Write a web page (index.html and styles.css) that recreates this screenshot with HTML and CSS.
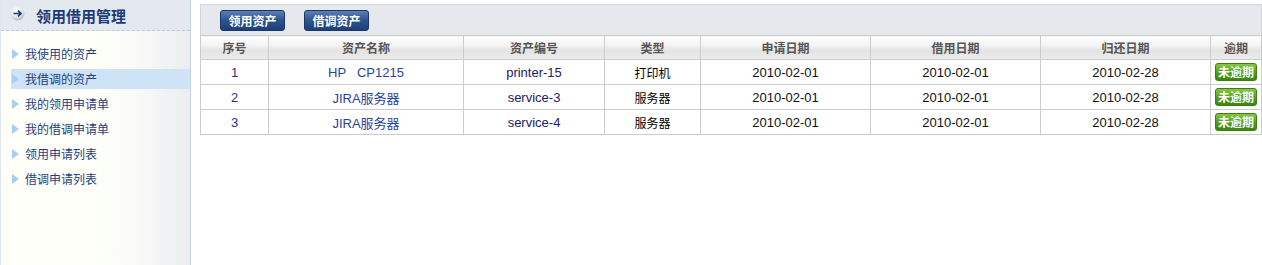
FILE: index.html
```html
<!DOCTYPE html>
<html lang="zh-CN">
<head>
    <meta charset="UTF-8">
    <title>领用借用管理</title>
    <link rel="stylesheet" href="styles.css">
</head>
<body>
    <div class="side">
        <div class="side-head">
            <svg class="head-icon" width="15" height="15" viewBox="0 0 15 15">
                <defs>
                    <radialGradient id="ball" cx="40%" cy="30%" r="75%">
                        <stop offset="0" stop-color="#ffffff"/>
                        <stop offset="0.6" stop-color="#e2e6ec"/>
                        <stop offset="1" stop-color="#a7b1bf"/>
                    </radialGradient>
                </defs>
                <circle cx="7.5" cy="7.5" r="7" fill="url(#ball)"/>
                <path d="M3.5 7.5 H11 M8 4.6 L11 7.5 L8 10.4" fill="none" stroke="#1d3a6e" stroke-width="1.7"/>
            </svg>
            <span class="head-title">领用借用管理</span>
        </div>
        <ul class="menu">
            <li><i></i>我使用的资产</li>
            <li class="current"><i></i>我借调的资产</li>
            <li><i></i>我的领用申请单</li>
            <li><i></i>我的借调申请单</li>
            <li><i></i>领用申请列表</li>
            <li><i></i>借调申请列表</li>
        </ul>
    </div>

    <div class="main">
        <div class="toolbar">
            <span class="btn">领用资产</span>
            <span class="btn">借调资产</span>
        </div>
        <table class="list">
            <tr>
                <th class="c-no">序号</th>
                <th class="c-name">资产名称</th>
                <th class="c-code">资产编号</th>
                <th class="c-type">类型</th>
                <th class="c-date">申请日期</th>
                <th class="c-date">借用日期</th>
                <th class="c-date">归还日期</th>
                <th class="c-over">逾期</th>
            </tr>
            <tr>
                <td class="no">1</td>
                <td class="name">HP&nbsp;&nbsp;&nbsp;CP1215</td>
                <td class="code">printer-15</td>
                <td class="type">打印机</td>
                <td>2010-02-01</td>
                <td>2010-02-01</td>
                <td>2010-02-28</td>
                <td><span class="tag">未逾期</span></td>
            </tr>
            <tr>
                <td class="no">2</td>
                <td class="name">JIRA服务器</td>
                <td class="code">service-3</td>
                <td class="type">服务器</td>
                <td>2010-02-01</td>
                <td>2010-02-01</td>
                <td>2010-02-28</td>
                <td><span class="tag">未逾期</span></td>
            </tr>
            <tr>
                <td class="no">3</td>
                <td class="name">JIRA服务器</td>
                <td class="code">service-4</td>
                <td class="type">服务器</td>
                <td>2010-02-01</td>
                <td>2010-02-01</td>
                <td>2010-02-28</td>
                <td><span class="tag">未逾期</span></td>
            </tr>
        </table>
    </div>
</body>
</html>
```

FILE: styles.css
```css
* {
    margin: 0;
    padding: 0;
}

body {
    display: flex;
    height: 265px;
    overflow: hidden;
    background: #fff;
    font-family: "Liberation Sans", "Noto Sans CJK SC", sans-serif;
    font-size: 12px;
}

.side {
    width: 189px;
    height: 265px;
    border-left: 1px solid #dfe5ec;
    border-right: 1px solid #c9d3df;
    background: linear-gradient(to right, #fdfff8 50%, #fafbf8 70%, #ebedf0 100%);
}

.side-head {
    height: 30px;
    display: flex;
    align-items: center;
    background: #e4e9ef;
    border-bottom: 1px dashed #bccadb;
}

.head-icon {
    margin-left: 9px;
    margin-top: -3px;
}

.head-title {
    margin-left: 11px;
    font-size: 15px;
    font-weight: bold;
    color: #1d3a78;
    font-family: "Noto Sans CJK SC", sans-serif;
}

.menu {
    list-style: none;
    padding-top: 13px;
}

.menu li {
    height: 20px;
    line-height: 20px;
    margin-bottom: 5px;
    margin-left: 10px;
    display: flex;
    align-items: center;
    color: #1f3f80;
    font-family: "Noto Sans CJK SC", sans-serif;
}

.menu li i {
    width: 0;
    height: 0;
    border-top: 5px solid transparent;
    border-bottom: 5px solid transparent;
    border-left: 7px solid #a9cfee;
    margin-left: 1px;
    margin-right: 6px;
}

.menu li.current {
    background: #cfe3f7;
}

.main {
    flex: 1;
    padding: 4px 0 0 9px;
}

.toolbar {
    height: 30px;
    border: 1px solid #d2d5d9;
    border-bottom: none;
    background: #e5e9ee;
    padding-left: 19px;
    display: flex;
    align-items: center;
    gap: 19px;
}

.btn {
    width: 63px;
    height: 19px;
    line-height: 19px;
    margin-top: 1px;
    text-align: center;
    color: #fff;
    font-weight: bold;
    font-family: "Noto Sans CJK SC", sans-serif;
    border: 1px solid #1b3768;
    border-radius: 3px;
    background: linear-gradient(#5b80b4, #2d5390 50%, #1d3f78);
}

.list {
    width: 1062px;
    border-collapse: collapse;
    table-layout: fixed;
}

.list th,
.list td {
    border: 1px solid #cccccc;
    text-align: center;
}

.list th {
    height: 23px;
    color: #555;
    font-weight: bold;
    font-family: "Noto Sans CJK SC", sans-serif;
    background: linear-gradient(#ffffff, #f3f3f3 40%, #e3e3e3 60%, #ececec);
}

.list td {
    height: 24px;
    color: #111;
    font-size: 13px;
}

.c-no { width: 67px; }
.c-name { width: 194px; }
.c-code { width: 140px; }
.c-type { width: 95px; }
.c-date { width: 169px; }

.list td.no { color: #2c2f8f; }
.list td.name { color: #2942a0; }
.list td.code { color: #20206a; }
.list td.type { color: #000; font-size: 12px; font-family: "Noto Sans CJK SC", sans-serif; }

.tag {
    display: inline-block;
    width: 40px;
    height: 16px;
    line-height: 16px;
    font-size: 12px;
    font-weight: bold;
    color: #fff;
    font-family: "Noto Sans CJK SC", sans-serif;
    border: 1px solid #3d7d12;
    border-radius: 3px;
    background: linear-gradient(#86c845, #56a01d 50%, #3c850c);
    vertical-align: middle;
}
```
